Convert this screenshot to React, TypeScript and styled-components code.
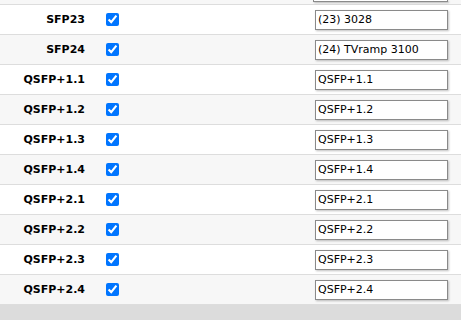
import React from 'react'
import styled, { createGlobalStyle } from 'styled-components'

const ports = [
  { name: 'SFP23', alias: '(23) 3028' },
  { name: 'SFP24', alias: '(24) TVramp 3100' },
  { name: 'QSFP+1.1', alias: 'QSFP+1.1' },
  { name: 'QSFP+1.2', alias: 'QSFP+1.2' },
  { name: 'QSFP+1.3', alias: 'QSFP+1.3' },
  { name: 'QSFP+1.4', alias: 'QSFP+1.4' },
  { name: 'QSFP+2.1', alias: 'QSFP+2.1' },
  { name: 'QSFP+2.2', alias: 'QSFP+2.2' },
  { name: 'QSFP+2.3', alias: 'QSFP+2.3' },
  { name: 'QSFP+2.4', alias: 'QSFP+2.4' },
]

export default function App() {
  return (
    <>
      <GlobalStyle />
      <Page>
        <PortList>
          {/* tail of the row scrolled above (SFP22) */}
          <ScrolledTail>
            <TailInput />
          </ScrolledTail>
          {ports.map((port, i) => (
            <PortRow key={port.name} $alt={i % 2 === 1}>
              <PortName>{port.name}</PortName>
              <Enable type="checkbox" defaultChecked />
              <AliasInput type="text" defaultValue={port.alias} />
            </PortRow>
          ))}
        </PortList>
        <Footer />
      </Page>
    </>
  )
}

const GlobalStyle = createGlobalStyle`
  html, body {
    margin: 0;
    padding: 0;
    background: #dcdcdc;
  }
  body {
    font-family: "DejaVu Sans", Verdana, sans-serif;
    overflow: hidden;
  }
`

const Page = styled.div`
  width: 461px;
  height: 320px;
  overflow: hidden;
  display: flex;
  flex-direction: column;
`

const PortList = styled.ul`
  margin: 0;
  padding: 0;
  list-style: none;
  background: #fff;
`

const ScrolledTail = styled.li`
  display: flex;
  justify-content: flex-end;
  align-items: flex-start;
  height: 4px;
  padding-right: 13px;
  border-bottom: 1px solid #dddddd;
  background: #f7f7f7;
`

const TailInput = styled.div`
  width: 133px;
  height: 1px;
  border: 1px solid #8a8a8a;
  border-top: none;
  box-shadow: 1px 1px 2px rgba(0, 0, 0, 0.25);
  background: #fff;
`

const PortRow = styled.li<{ $alt: boolean }>`
  display: grid;
  grid-template-columns: 85px 13px 1fr;
  align-items: center;
  height: 29px;
  padding-right: 13px;
  border-bottom: 1px solid #dddddd;
  background: ${(p) => (p.$alt ? '#f7f7f7' : '#ffffff')};
`

const PortName = styled.span`
  text-align: right;
  font-weight: 700;
  font-size: 11px;
  color: #000;
  white-space: nowrap;
`

const Enable = styled.input`
  width: 13px;
  height: 13px;
  margin: 0 0 0 21px;
  accent-color: #0075ff;
`

const AliasInput = styled.input`
  justify-self: end;
  box-sizing: border-box;
  width: 133px;
  height: 20px;
  margin: 0;
  padding: 0 2px;
  border: 1px solid #8a8a8a;
  border-radius: 0;
  box-shadow: 1px 1px 2px rgba(0, 0, 0, 0.25);
  background: #fff;
  font-family: "DejaVu Sans", Verdana, sans-serif;
  font-size: 11px;
  color: #000;
  outline: none;
`

const Footer = styled.div`
  flex: 1;
  background: #dcdcdc;
`
